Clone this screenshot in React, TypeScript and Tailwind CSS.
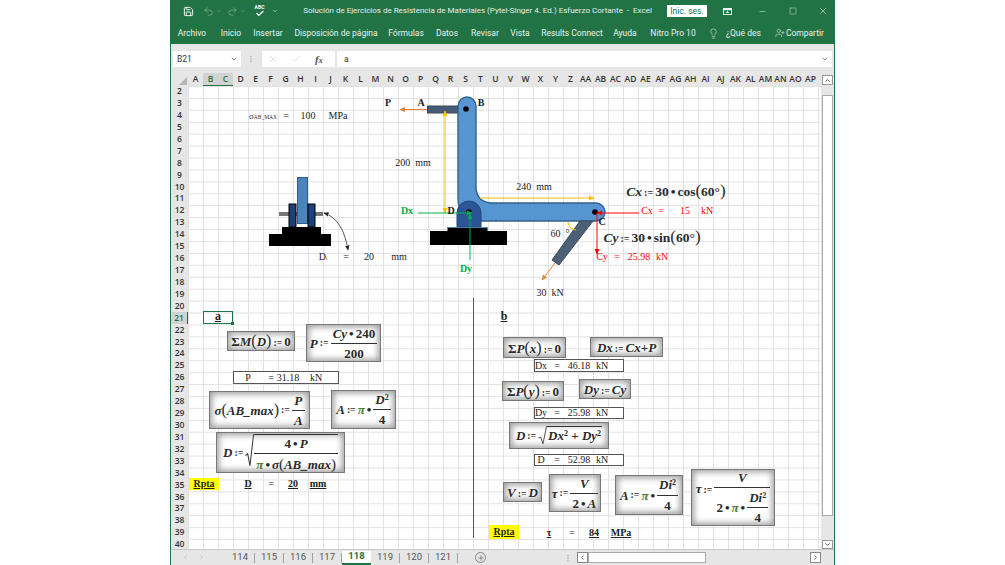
import React from "react";
import { Save, Undo2, Redo2, Check, Lightbulb, UserPlus, X, Minus, Square, ChevronDown, Plus, ChevronLeft, ChevronRight, ChevronUp, Ellipsis } from "lucide-react";

const cols = ["A","B","C","D","E","F","G","H","I","J","K","L","M","N","O","P","Q","R","S","T","U","V","W","X","Y","Z","AA","AB","AC","AD","AE","AF","AG","AH","AI","AJ","AK","AL","AM","AN","AO","AP"];
const rows = Array.from({ length: 39 }, (_, i) => i + 2);
const menu: [string, string][] = [
  ["Archivo", "w-[42px]"], ["Inicio", "w-[36px]"], ["Insertar", "w-[38px]"], ["Disposición de página", "w-[98px]"], ["Fórmulas", "w-[42px]"],
  ["Datos", "w-[40px]"], ["Revisar", "w-[36px]"], ["Vista", "w-[34px]"], ["Results Connect", "w-[70px]"], ["Ayuda", "w-[36px]"], ["Nitro Pro 10", "w-[60px]"],
];
const tabs = ["114", "115", "116", "117", "118", "119", "120", "121"];

function T({ c, children }: { c: string; children: React.ReactNode }) {
  return <span className={"absolute -translate-x-1/2 -translate-y-1/2 whitespace-pre font-['Liberation_Serif',serif] leading-none " + c}>{children}</span>;
}
function Box({ c, children }: { c: string; children: React.ReactNode }) {
  return <div className={"absolute flex items-center justify-center whitespace-nowrap bg-white border border-[#777] shadow-[inset_0_0_6px_2px_#9c9c9c] font-['Liberation_Serif',serif] font-bold text-[#2a2a2a] leading-none " + c}>{children}</div>;
}
function Frame({ c }: { c: string }) {
  return <div className={"absolute bg-white border border-[#555] " + c} />;
}
function Frac({ n, d }: { n: React.ReactNode; d: React.ReactNode }) {
  return (
    <span className="inline-flex flex-col items-center">
      <span className="px-[2px] pb-[3px] whitespace-nowrap">{n}</span>
      <span className="self-stretch border-t border-[#333] px-[2px] pt-[3px] text-center whitespace-nowrap">{d}</span>
    </span>
  );
}
const Def = () => <span className="mx-[2px] text-[0.75em] font-bold not-italic">:=</span>;
const Dot = () => <span className="mx-[2px] not-italic">•</span>;
const Pi = () => <span className="text-[#4f7a1f] italic">π</span>;
const Sq = () => <span className="relative -top-[4px] text-[0.62em] not-italic">2</span>;

function Root({ h, children }: { h: string; children: React.ReactNode }) {
  return (
    <span className="inline-flex items-stretch">
      <svg viewBox="0 0 10 30" preserveAspectRatio="none" className={"w-[9px] " + h}>
        <path d="M0.5 19 L3 17.5 L5.5 28 L9.5 0.7 L10 0.7" fill="none" stroke="#333" strokeWidth="1.1" />
      </svg>
      <span className="border-t border-[#333] pt-[2px]">{children}</span>
    </span>
  );
}

function Drawing() {
  return (
    <svg viewBox="188 85 634 464" className="absolute left-[188px] top-[85px] w-[634px] h-[464px]">
      <defs>
        <marker id="or" markerWidth="6" markerHeight="6" refX="5" refY="3" orient="auto"><path d="M0 0.5 L5.5 3 L0 5.5Z" fill="#ed7d31" /></marker>
        <marker id="ye" markerWidth="6" markerHeight="6" refX="5" refY="3" orient="auto-start-reverse"><path d="M0 0.5 L5.5 3 L0 5.5Z" fill="#ffc000" /></marker>
        <marker id="gr" markerWidth="6" markerHeight="6" refX="5" refY="3" orient="auto"><path d="M0 0.5 L5.5 3 L0 5.5Z" fill="#00b050" /></marker>
        <marker id="re" markerWidth="6" markerHeight="6" refX="5" refY="3" orient="auto"><path d="M0 0.5 L5.5 3 L0 5.5Z" fill="#ff0000" /></marker>
        <marker id="bk" markerWidth="7" markerHeight="7" refX="5" refY="3" orient="auto-start-reverse"><path d="M0 0.5 L5.5 3 L0 5.5Z" fill="#222" /></marker>
      </defs>

      {/* small side view */}
      <rect x="279" y="212" width="44" height="4" fill="#77787c" />
      <rect x="297" y="204" width="11" height="20" fill="#ffffff" />
      <rect x="297.5" y="177.5" width="10" height="46" fill="#4d83bb" stroke="#2f5f92" />
      <rect x="289" y="204" width="7" height="23" fill="#1f3f77" stroke="#000" />
      <rect x="308" y="204" width="7" height="23" fill="#1f3f77" stroke="#000" />
      <rect x="282" y="227" width="39" height="8" fill="#000" />
      <rect x="269" y="234" width="62" height="12" fill="#000" />
      <path d="M324 213 Q343 219 348 250" fill="none" stroke="#444" strokeWidth="0.9" markerStart="url(#bk)" markerEnd="url(#bk)" />

      {/* main body */}
      <rect x="427.5" y="106" width="32" height="7" fill="#465a75" stroke="#38485e" />
      <path d="M458 106 a9 9 0 0 1 18 0 V186 Q476 203 493 203 H596 a9 9 0 0 1 0 18 H482 Q458 221 458 198 Z" fill="#5795d1" stroke="#31628f" strokeWidth="1.4" />
      <path d="M593 221 L580 221 L552 260 L559 265 Z" fill="#4e6076" stroke="#3a4a5e" />
      <path d="M457 227 V213 a12 12 0 0 1 24 0 V227 Z" fill="#2c5597" stroke="#234878" />
      <rect x="447.5" y="227.5" width="40" height="5" fill="#000" stroke="#4d83bb" strokeWidth="0.8" />
      <rect x="430" y="231" width="77" height="14" fill="#000" />
      <circle cx="466" cy="109" r="2.8" fill="#000" />
      <circle cx="469" cy="212" r="2.8" fill="#000" />
      <circle cx="595" cy="212" r="2.8" fill="#000" />

      {/* dimensions and forces */}
      <line x1="427" y1="109.5" x2="400" y2="109.5" stroke="#ed7d31" strokeWidth="1" markerEnd="url(#or)" />
      <line x1="445" y1="111" x2="445" y2="213" stroke="#ffc000" strokeWidth="1" markerStart="url(#ye)" markerEnd="url(#ye)" />
      <line x1="480" y1="198" x2="594" y2="198" stroke="#ffc000" strokeWidth="1" markerEnd="url(#ye)" />
      <line x1="418" y1="213" x2="472" y2="213" stroke="#00b050" strokeWidth="1" markerEnd="url(#gr)" />
      <line x1="470" y1="260" x2="470" y2="214" stroke="#00b050" strokeWidth="1" markerEnd="url(#gr)" />
      <line x1="639" y1="213" x2="597" y2="213" stroke="#ff0000" strokeWidth="1" markerEnd="url(#re)" />
      <line x1="597" y1="213" x2="597" y2="254" stroke="#ff0000" strokeWidth="1" markerEnd="url(#re)" />
      <line x1="555" y1="263" x2="542" y2="280" stroke="#ed7d31" strokeWidth="1" markerEnd="url(#or)" />
      <path d="M568 222 Q569 229 576 230" fill="none" stroke="#ffc000" strokeWidth="1.1" />

      {/* divider */}
      <line x1="473.5" y1="298" x2="473.5" y2="538" stroke="#555" strokeWidth="1" />
    </svg>
  );
}

function Sheet() {
  return (
    <div className="absolute -left-[171px] -top-[73px] w-[1005px] h-[565px] pointer-events-none text-[#222]">
      <div className="absolute left-[203px] top-[311px] w-[30px] h-[13px] border-[1.5px] border-[#217346]" />
      <div className="absolute left-[231px] top-[322px] w-[3px] h-[3px] bg-[#217346]" />
      <div className="absolute left-[189px] top-[478px] w-[30px] h-[12px] bg-[#ffff00]" />
      <div className="absolute left-[489px] top-[525px] w-[30px] h-[14px] bg-[#ffff00]" />
      <Frame c="left-[233px] top-[371px] w-[106px] h-[13px]" />
      <Frame c="left-[534px] top-[359px] w-[90px] h-[13px]" />
      <Frame c="left-[534px] top-[407px] w-[90px] h-[12px]" />
      <Frame c="left-[534px] top-[454px] w-[90px] h-[12px]" />

      <Drawing />

      {/* text over the left drawing */}
      <T c="left-[263px] top-[116px] text-[8px] text-[#333]"><span className="text-[9px]">σ</span><span className="text-[5.5px]">AB_MAX</span></T>
      <T c="left-[286px] top-[116px] text-[10px]">=</T>
      <T c="left-[308px] top-[116px] text-[10px]">100</T>
      <T c="left-[338px] top-[116px] text-[10px]">MPa</T>
      <T c="left-[323px] top-[257px] text-[10px]">D<span className="text-[5px]">i</span></T>
      <T c="left-[346px] top-[257px] text-[10px]">=</T>
      <T c="left-[369px] top-[257px] text-[10px]">20</T>
      <T c="left-[399px] top-[257px] text-[10px]">mm</T>

      {/* main drawing labels */}
      <T c="left-[388px] top-[103px] text-[10px] font-bold">P</T>
      <T c="left-[421px] top-[103px] text-[10px] font-bold">A</T>
      <T c="left-[481px] top-[103px] text-[10px] font-bold">B</T>
      <T c="left-[413px] top-[163px] text-[10px]">200  mm</T>
      <T c="left-[534px] top-[187px] text-[10px]">240  mm</T>
      <T c="left-[407px] top-[211px] text-[10px] font-bold text-[#00b050]">Dx</T>
      <T c="left-[451px] top-[211px] text-[10px] font-bold">D</T>
      <T c="left-[466px] top-[269px] text-[10px] font-bold text-[#00b050]">Dy</T>
      <T c="left-[602px] top-[222px] text-[10px] font-bold">C</T>
      <T c="left-[560px] top-[234px] text-[10px]">60  °</T>
      <T c="left-[550px] top-[293px] text-[10px]">30  kN</T>
      <T c="left-[647px] top-[211px] text-[10px] text-[#ff0000]">Cx</T>
      <T c="left-[661px] top-[211px] text-[10px] text-[#ff0000]">=</T>
      <T c="left-[685px] top-[211px] text-[10px] text-[#ff0000]">15</T>
      <T c="left-[707px] top-[211px] text-[10px] text-[#ff0000]">kN</T>
      <T c="left-[602px] top-[257px] text-[10px] text-[#ff0000]">Cy</T>
      <T c="left-[617px] top-[257px] text-[10px] text-[#ff0000]">=</T>
      <T c="left-[639px] top-[257px] text-[10px] text-[#ff0000]">25.98</T>
      <T c="left-[662px] top-[257px] text-[10px] text-[#ff0000]">kN</T>
      <T c="left-[676px] top-[190px] text-[13.5px] font-bold text-[#2a2a2a]"><i>Cx</i><Def />30<Dot />cos<span className="text-[17px] font-normal">(</span>60°<span className="text-[17px] font-normal">)</span></T>
      <T c="left-[652px] top-[236px] text-[13.5px] font-bold text-[#2a2a2a]"><i>Cy</i><Def />30<Dot />sin<span className="text-[17px] font-normal">(</span>60°<span className="text-[17px] font-normal">)</span></T>

      {/* part a */}
      <T c="left-[218px] top-[316px] text-[12px] font-bold underline">a</T>
      <Box c="left-[227px] top-[331px] w-[68px] h-[20px] text-[13px]">
        <span>Σ<i>M</i><span className="text-[16px] font-normal">(</span><i>D</i><span className="text-[16px] font-normal">)</span><Def />0</span>
      </Box>
      <Box c="left-[306px] top-[324px] w-[75px] h-[38px] text-[13px]">
        <i>P</i><Def /><Frac n={<><i>Cy</i><Dot />240</>} d="200" />
      </Box>
      <T c="left-[248px] top-[378px] text-[10px]">P</T>
      <T c="left-[271px] top-[378px] text-[10px]">=</T>
      <T c="left-[288px] top-[378px] text-[10px]">31.18</T>
      <T c="left-[316px] top-[378px] text-[10px]">kN</T>
      <Box c="left-[209px] top-[391px] w-[101px] h-[38px] text-[13px]">
        <i>σ</i><span className="text-[16px] font-normal">(</span><i>AB_max</i><span className="text-[16px] font-normal">)</span><Def /><Frac n={<i>P</i>} d={<i>A</i>} />
      </Box>
      <Box c="left-[331px] top-[390px] w-[65px] h-[39px] text-[13px]">
        <i>A</i><Def /><Pi /><Dot /><Frac n={<><i>D</i><Sq /></>} d="4" />
      </Box>
      <Box c="left-[216px] top-[432px] w-[129px] h-[41px] text-[13px]">
        <i>D</i><Def />
        <Root h="h-[34px]"><Frac n={<>4<Dot /><i>P</i></>} d={<><Pi /><Dot /><i>σ</i><span className="text-[15px] font-normal">(</span><i>AB_max</i><span className="text-[15px] font-normal">)</span></>} /></Root>
      </Box>
      <T c="left-[204px] top-[484px] text-[10px] font-bold underline">Rpta</T>
      <T c="left-[248px] top-[484px] text-[10px] font-bold underline">D</T>
      <T c="left-[271px] top-[484px] text-[10px]">=</T>
      <T c="left-[293px] top-[484px] text-[10px] font-bold underline">20</T>
      <T c="left-[318px] top-[484px] text-[10px] font-bold underline">mm</T>

      {/* part b */}
      <T c="left-[504px] top-[316px] text-[12px] font-bold underline">b</T>
      <Box c="left-[503px] top-[337px] w-[63px] h-[21px] text-[13px]">
        <span>Σ<i>P</i><span className="text-[16px] font-normal">(</span><i>x</i><span className="text-[16px] font-normal">)</span><Def />0</span>
      </Box>
      <Box c="left-[590px] top-[337px] w-[73px] h-[20px] text-[13px]">
        <span><i>Dx</i><Def /><i>Cx</i>+<i>P</i></span>
      </Box>
      <T c="left-[541px] top-[366px] text-[10px]">Dx</T>
      <T c="left-[557px] top-[366px] text-[10px]">=</T>
      <T c="left-[579px] top-[366px] text-[10px]">46.18</T>
      <T c="left-[602px] top-[366px] text-[10px]">kN</T>
      <Box c="left-[502px] top-[381px] w-[62px] h-[20px] text-[13px]">
        <span>Σ<i>P</i><span className="text-[16px] font-normal">(</span><i>y</i><span className="text-[16px] font-normal">)</span><Def />0</span>
      </Box>
      <Box c="left-[579px] top-[379px] w-[52px] h-[20px] text-[13px]">
        <span><i>Dy</i><Def /><i>Cy</i></span>
      </Box>
      <T c="left-[541px] top-[413px] text-[10px]">Dy</T>
      <T c="left-[557px] top-[413px] text-[10px]">=</T>
      <T c="left-[579px] top-[413px] text-[10px]">25.98</T>
      <T c="left-[602px] top-[413px] text-[10px]">kN</T>
      <Box c="left-[509px] top-[422px] w-[100px] h-[27px] text-[13px]">
        <i>D</i><Def /><Root h="h-[19px]"><span className="px-[1px]"><i>Dx</i><Sq /> + <i>Dy</i><Sq /></span></Root>
      </Box>
      <T c="left-[541px] top-[460px] text-[10px]">D</T>
      <T c="left-[557px] top-[460px] text-[10px]">=</T>
      <T c="left-[579px] top-[460px] text-[10px]">52.98</T>
      <T c="left-[602px] top-[460px] text-[10px]">kN</T>
      <Box c="left-[503px] top-[482px] w-[39px] h-[20px] text-[13px]">
        <span><i>V</i><Def /><i>D</i></span>
      </Box>
      <Box c="left-[549px] top-[474px] w-[52px] h-[38px] text-[13px]">
        <i>τ</i><Def /><Frac n={<i>V</i>} d={<>2<Dot /><i>A</i></>} />
      </Box>
      <Box c="left-[615px] top-[475px] w-[68px] h-[40px] text-[13px]">
        <i>A</i><Def /><Pi /><Dot /><Frac n={<><i>Di</i><Sq /></>} d="4" />
      </Box>
      <Box c="left-[691px] top-[469px] w-[84px] h-[57px] text-[13px]">
        <span className="-mt-[18px]"><i>τ</i><Def /></span><Frac n={<i>V</i>} d={<span className="inline-flex items-center">2<Dot /><Pi /><Dot /><Frac n={<><i>Di</i><Sq /></>} d="4" /></span>} />
      </Box>
      <T c="left-[504px] top-[532px] text-[10px] font-bold underline">Rpta</T>
      <T c="left-[549px] top-[533px] text-[10px] font-bold underline">τ</T>
      <T c="left-[572px] top-[533px] text-[10px]">=</T>
      <T c="left-[594px] top-[533px] text-[10px] font-bold underline">84</T>
      <T c="left-[621px] top-[533px] text-[10px] font-bold underline">MPa</T>
    </div>
  );
}

export default function App() {
  return (
    <div className="h-[565px] w-[1005px] overflow-hidden bg-white pl-[170px] font-['Roboto',sans-serif]">
      <div className="flex h-[565px] w-[665px] flex-col border-x border-[#217346] bg-[#e6e6e6]">
        {/* title bar */}
        <div className="flex h-[22px] items-center bg-[#217346] text-white">
          <div className="flex w-[118px] items-center pl-[12px]">
            <Save size={11} strokeWidth={2} />
            <Undo2 size={11} className="ml-[9px] text-[#6fa585]" />
            <ChevronDown size={6} className="ml-[2px] text-[#6fa585]" />
            <Redo2 size={11} className="ml-[5px] text-[#6fa585]" />
            <ChevronDown size={6} className="ml-[2px] text-[#6fa585]" />
            <span className="relative ml-[8px] flex h-[14px] w-[11px] flex-col items-center">
              <span className="text-[5px] font-bold leading-[6px]">ABC</span>
              <Check size={10} strokeWidth={3.5} className="-mt-[1px]" />
            </span>
            <ChevronDown size={6} className="ml-[7px]" />
          </div>
          <div className="w-[377px] whitespace-pre text-center text-[8px] text-[#e4efe8]">Solución de Ejercicios de Resistencia de Materiales (Pytel-Singer 4. Ed.) Esfuerzo Cortante  -  Excel</div>
          <div className="ml-[1px] flex h-[12px] w-[40px] items-center justify-center bg-white text-[8.5px] text-[#217346]">Inic. ses.</div>
          <svg viewBox="0 0 10 8" className="ml-[16px] h-[7px] w-[9px]"><rect x="0.5" y="0.5" width="9" height="7" fill="none" stroke="#fff" /><rect x="0" y="0" width="10" height="2.5" fill="#fff" /><path d="M5 3 L7 5.5 H3Z" fill="#fff" /></svg>
          <Minus size={9} className="ml-[26px]" strokeWidth={1.2} />
          <Square size={8} className="ml-[22px]" strokeWidth={1.2} />
          <X size={10} className="ml-[21px]" strokeWidth={1.2} />
        </div>
        {/* ribbon tabs */}
        <div className="flex h-[22px] items-center bg-[#217346] text-[8.5px] text-[#e8f1ec]">
          {menu.map(([label, w]) => (
            <span key={label} className={"text-center whitespace-nowrap " + w}>{label}</span>
          ))}
          <Lightbulb size={11} strokeWidth={1.3} className="ml-[5px]" />
          <span className="ml-[7px] whitespace-nowrap">¿Qué des</span>
          <UserPlus size={10} strokeWidth={1.3} className="ml-[14px]" />
          <span className="ml-[1px] whitespace-nowrap">Compartir</span>
        </div>
        {/* formula bar */}
        <div className="flex h-[29px] items-center bg-[#e6e6e6] pt-[1px]">
          <div className="ml-[2px] flex h-[16px] w-[68px] items-center justify-between bg-white pl-[4px] pr-[3px] text-[8.5px] text-[#333]">
            B21<ChevronDown size={8} className="text-[#555]" />
          </div>
          <Ellipsis size={8} className="ml-[6px] rotate-90 text-[#aaa]" />
          <div className="ml-[7px] flex h-[16px] w-[73px] items-center bg-white pl-[6px] text-[#bdbdbd]">
            <X size={10} strokeWidth={1.2} />
            <Check size={10} strokeWidth={1.2} className="ml-[13px]" />
            <i className="ml-[14px] font-['Liberation_Serif',serif] text-[11px] font-bold text-[#555]">f<span className="text-[8px]">x</span></i>
          </div>
          <div className="ml-[2px] flex h-[16px] w-[495px] items-center justify-between bg-white pl-[7px] pr-[3px] text-[8.5px] text-[#333]">
            a<ChevronDown size={8} className="text-[#555]" />
          </div>
        </div>
        {/* sheet */}
        <div className="flex min-h-0 flex-1">
          <div className="relative w-[650px]">
            <div className="flex h-[12.6px] w-[650px] font-['Open_Sans',sans-serif] text-[8.5px] font-semibold leading-[12px] text-[#333]">
              <div className="flex w-[17px] items-end justify-end pb-[1px] pr-[1px]">
                <svg viewBox="0 0 8 8" className="h-[8px] w-[8px]"><path d="M8 0V8H0Z" fill="#b5b5b5" /></svg>
              </div>
              {cols.map((c) => (
                <span key={c} className={"w-[15px] shrink-0 text-center whitespace-nowrap " + (c === "B" || c === "C" ? "bg-[#d2d2d2] border-b border-[#217346] text-[#217346]" : "")}>{c}</span>
              ))}
            </div>
            <div className="flex h-[463.4px] overflow-hidden">
              <div className="w-[17px] font-['Open_Sans',sans-serif] text-[8.5px] font-semibold text-[#333]">
                {rows.map((r) => (
                  <div key={r} className={"flex h-[11.93px] items-center justify-center " + (r === 21 ? "bg-[#d2d2d2] border-r border-[#217346] text-[#217346]" : "")}>{r}</div>
                ))}
              </div>
              <div className="h-[464px] w-[633px] bg-white bg-[linear-gradient(#e2e2e2_1px,transparent_1px),linear-gradient(90deg,#e2e2e2_1px,transparent_1px)] bg-[size:15px_11.93px]" />
            </div>
            <Sheet />
          </div>
          <div className="flex w-[13px] flex-col items-center bg-[#e6e6e6] pt-[2px]">
            <div className="flex h-[10px] w-[11px] items-center justify-center border border-[#999] bg-white"><ChevronUp size={7} strokeWidth={3} className="text-[#444]" /></div>
            <div className="mt-[10px] h-[421px] w-[11px] border border-[#aaa] bg-white" />
            <div className="mt-[24px] flex h-[9px] w-[11px] items-center justify-center border border-[#999] bg-white"><ChevronDown size={7} strokeWidth={3} className="text-[#444]" /></div>
          </div>
        </div>
        {/* sheet tabs */}
        <div className="flex h-[16px] items-center border-t border-[#c8c8c8] bg-[#e6e6e6] text-[9.5px] text-[#555]">
          <ChevronLeft size={7} className="ml-[11px] text-[#aaa]" />
          <ChevronRight size={7} className="ml-[9px] text-[#aaa]" />
          <div className="ml-[21px] flex h-[14px] items-center">
            {tabs.map((t) => t === "118" ? (
              <span key={t} className="flex h-[14px] w-[29px] items-center justify-center border-b-2 border-[#217346] bg-white font-bold text-[#217346]">{t}</span>
            ) : (
              <span key={t} className="flex h-[10px] w-[29px] items-center justify-center border-r border-[#a0a0a0]">{t}</span>
            ))}
          </div>
          <span className="ml-[17px] flex h-[11px] w-[11px] items-center justify-center rounded-full border border-[#888]"><Plus size={8} className="text-[#666]" /></span>
          <Ellipsis size={8} className="ml-[78px] rotate-90 text-[#aaa]" />
          <div className="ml-[5px] flex h-[11px] w-[244px] items-stretch">
            <div className="flex w-[11px] items-center justify-center border border-[#888] bg-white"><ChevronLeft size={7} strokeWidth={3} /></div>
            <div className="w-[118px] border border-[#aaa] bg-white" />
            <div className="flex-1" />
            <div className="flex w-[11px] items-center justify-center border border-[#888] bg-white"><ChevronRight size={7} strokeWidth={3} /></div>
          </div>
        </div>
      </div>
    </div>
  );
}
